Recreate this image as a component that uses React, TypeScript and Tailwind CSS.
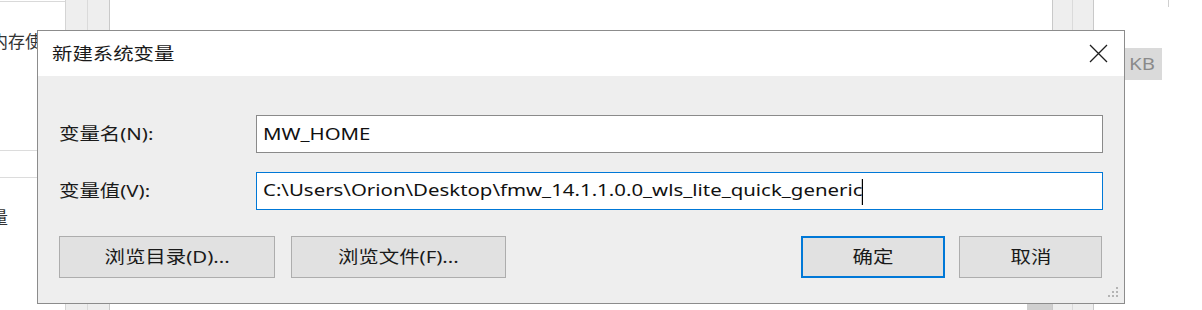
// Screenshot is slightly stretched horizontally, so text is widened to match.
function Wide({ children, center = false }: { children: React.ReactNode; center?: boolean }) {
  return (
    <span className={center ? 'inline-block origin-center scale-x-[1.2]' : 'inline-block origin-left scale-x-[1.2]'}>
      {children}
    </span>
  );
}

function CloseIcon() {
  return (
    <svg width="19" height="19" viewBox="0 0 19 19" className="text-[#1e1e1e]">
      <path d="M1 1 L18 18 M18 1 L1 18" stroke="currentColor" strokeWidth="1.3" fill="none" />
    </svg>
  );
}

function ResizeGrip() {
  return (
    <svg width="14" height="14" viewBox="0 0 14 14" className="text-[#b4b4b4]">
      <rect x="10" y="1" width="2" height="2" fill="currentColor" />
      <rect x="6" y="5" width="2" height="2" fill="currentColor" />
      <rect x="10" y="5" width="2" height="2" fill="currentColor" />
      <rect x="2" y="9" width="2" height="2" fill="currentColor" />
      <rect x="6" y="9" width="2" height="2" fill="currentColor" />
      <rect x="10" y="9" width="2" height="2" fill="currentColor" />
    </svg>
  );
}

function Field({ label, value, focused }: { label: string; value: string; focused?: boolean }) {
  return (
    <div className="flex items-center">
      <div className="w-[197px] text-[17px] text-[#1a1a1a]">
        <Wide>{label}</Wide>
      </div>
      <div
        className={
          focused
            ? 'flex-1 h-[38px] bg-white border border-[#0078d7] flex items-center pl-[6px]'
            : 'flex-1 h-[38px] bg-white border border-[#8a8a8a] flex items-center pl-[6px]'
        }
      >
        <span className="text-[17px] text-[#111] whitespace-nowrap">
          <Wide>
            {value}
            {focused && <span className="inline-block w-px h-[26px] bg-black align-middle -ml-px" />}
          </Wide>
        </span>
      </div>
    </div>
  );
}

function Button({ label, width, primary }: { label: string; width: string; primary?: boolean }) {
  return (
    <button
      className={`${width} h-[42px] bg-[#e1e1e1] text-[17px] text-[#1a1a1a] ${
        primary ? 'border-2 border-[#0078d7]' : 'border border-[#adadad]'
      }`}
    >
      <Wide center>{label}</Wide>
    </button>
  );
}

export default function App() {
  return (
    <div className="relative w-[1202px] h-[310px] overflow-hidden bg-white font-['Noto_Sans','Noto_Sans_CJK_SC',sans-serif]">
      {/* window content behind the dialog */}
      <div className="flex h-full">
        <div className="w-[66px] flex flex-col border-r border-[#d4d4d4] overflow-hidden">
          <div className="h-[2px] border-b border-[#d9d9d9]" />
          <div className="mt-[27px] -ml-[9px] text-[17px] text-[#333] whitespace-nowrap">内存使用</div>
          <div className="mt-[95px] border-b border-[#dcdcdc]" />
          <div className="mt-[26px] border-b border-[#dcdcdc]" />
          <div className="mt-[27px] -ml-[9px] text-[17px] text-[#333] whitespace-nowrap">量</div>
        </div>
        <div className="w-[44px] flex bg-[#eeeeee] border-r border-[#c9c9c9]">
          <div className="w-[22px] border-r border-[#dadada]" />
        </div>
        <div className="flex-1 flex flex-col justify-end">
          <div className="h-[7px] w-[25px] ml-auto bg-[#cfcfcf]" />
        </div>
        <div className="w-[42px] flex bg-[#eeeeee] border-x border-[#c9c9c9]">
          <div className="w-[20px] border-r border-[#dadada]" />
        </div>
        <div className="w-[108px] relative">
          <div className="absolute left-[74px] top-0 w-px h-[7px] bg-[#d0d0d0]" />
          <div className="absolute left-[31px] top-[48px] w-[37px] h-[32px] bg-[#dadada] flex items-center pl-[4px] text-[17px] text-[#8a8a8a]">
            <Wide>KB</Wide>
          </div>
        </div>
      </div>

      {/* dialog */}
      <div className="absolute left-[37px] top-[30px] w-[1088px] h-[274px] border border-[#8c8c8c] bg-[#eeeeee] flex flex-col">
        <div className="h-[45px] bg-white flex items-center justify-between pl-[14px] pr-[16px]">
          <span className="text-[17px] text-[#1a1a1a]">
            <Wide>新建系统变量</Wide>
          </span>
          <CloseIcon />
        </div>
        <div className="flex-1 flex flex-col px-[21px] pt-[39px] relative">
          <Field label="变量名(N):" value="MW_HOME" />
          <div className="h-[19px]" />
          <Field label="变量值(V):" value="C:\Users\Orion\Desktop\fmw_14.1.1.0.0_wls_lite_quick_generic" focused />
          <div className="flex items-center mt-[26px] pr-[1px]">
            <Button label="浏览目录(D)..." width="w-[216px]" />
            <div className="w-[16px]" />
            <Button label="浏览文件(F)..." width="w-[215px]" />
            <div className="flex-1" />
            <Button label="确定" width="w-[144px]" primary />
            <div className="w-[14px]" />
            <Button label="取消" width="w-[143px]" />
          </div>
          <div className="absolute right-[4px] bottom-[3px]">
            <ResizeGrip />
          </div>
        </div>
      </div>
    </div>
  );
}
